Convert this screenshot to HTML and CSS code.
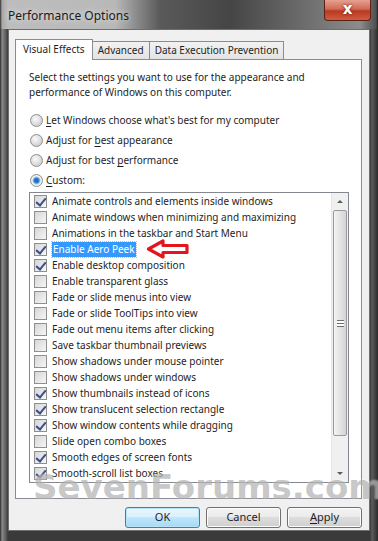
FILE: index.html
```html
<!DOCTYPE html>
<html lang="en">
<head>
    <meta charset="UTF-8">
    <meta name="viewport" content="width=device-width, initial-scale=1.0">
    <title>Performance Options</title>
    <link rel="stylesheet" href="styles.css">
</head>
<body>
    <div class="window">
        <div class="titlebar">
            <span class="title">Performance Options</span>
            <div class="close">x</div>
        </div>
        <div class="client">
            <div class="tabs">
                <div class="tab active">Visual Effects</div>
                <div class="tab">Advanced</div>
                <div class="tab">Data Execution Prevention</div>
            </div>
            <div class="panel">
                <p class="intro">Select the settings you want to use for the appearance and performance of Windows on this computer.</p>
                <div class="radios">
                    <div class="radio"><span class="dot"></span><span><u>L</u>et Windows choose what's best for my computer</span></div>
                    <div class="radio"><span class="dot"></span><span>Adjust for <u>b</u>est appearance</span></div>
                    <div class="radio"><span class="dot"></span><span>Adjust for best <u>p</u>erformance</span></div>
                    <div class="radio on"><span class="dot"></span><span><u>C</u>ustom:</span></div>
                </div>
                <div class="listbox">
                    <div class="items">
                        <div class="item on"><span class="cb"></span>Animate controls and elements inside windows</div>
                        <div class="item"><span class="cb"></span>Animate windows when minimizing and maximizing</div>
                        <div class="item"><span class="cb"></span>Animations in the taskbar and Start Menu</div>
                        <div class="item on"><span class="cb"></span><span class="sel">Enable Aero Peek</span>
                            <svg class="arrow" width="44" height="20" viewBox="0 0 44 20">
                                <path d="M2.5 10 L17 2 L17 6.5 L41 6.5 L41 13.5 L17 13.5 L17 18 Z" fill="#fff" stroke="#e3161f" stroke-width="3.2" stroke-linejoin="round"/>
                            </svg>
                        </div>
                        <div class="item on"><span class="cb"></span>Enable desktop composition</div>
                        <div class="item"><span class="cb"></span>Enable transparent glass</div>
                        <div class="item"><span class="cb"></span>Fade or slide menus into view</div>
                        <div class="item"><span class="cb"></span>Fade or slide ToolTips into view</div>
                        <div class="item"><span class="cb"></span>Fade out menu items after clicking</div>
                        <div class="item"><span class="cb"></span>Save taskbar thumbnail previews</div>
                        <div class="item"><span class="cb"></span>Show shadows under mouse pointer</div>
                        <div class="item"><span class="cb"></span>Show shadows under windows</div>
                        <div class="item on"><span class="cb"></span>Show thumbnails instead of icons</div>
                        <div class="item on"><span class="cb"></span>Show translucent selection rectangle</div>
                        <div class="item on"><span class="cb"></span>Show window contents while dragging</div>
                        <div class="item"><span class="cb"></span>Slide open combo boxes</div>
                        <div class="item on"><span class="cb"></span>Smooth edges of screen fonts</div>
                        <div class="item on"><span class="cb"></span>Smooth-scroll list boxes</div>
                    </div>
                    <div class="scrollbar">
                        <div class="sb-btn up"></div>
                        <div class="thumb"><span class="grip"></span></div>
                        <div class="sb-rest"></div>
                        <div class="sb-btn down"></div>
                    </div>
                </div>
            </div>
            <div class="buttons">
                <div class="btn default">OK</div>
                <div class="btn">Cancel</div>
                <div class="btn"><u>A</u>pply</div>
            </div>
            <div class="watermark">SevenForums.com</div>
        </div>
    </div>
</body>
</html>
```

FILE: styles.css
```css
* {
    margin: 0;
    padding: 0;
    box-sizing: border-box;
}
body {
    background: #3a3a3a;
    font-family: "Noto Sans", "Open Sans", sans-serif;
    font-size: 10px;
    color: #1e1e1e;
}
u {
    text-decoration: underline;
    text-underline-offset: 2px;
}
.window {
    width: 378px;
    height: 541px;
    padding: 0 8px 10px 8px;
    display: flex;
    flex-direction: column;
    background: linear-gradient(90deg, #262626 0, #8a8a8a 2px, #5a5a5a 6px, #3a3a3a 8px, #3a3a3a 370px, #5c5c5c 372px, #2a2a2a 378px);
}
.titlebar {
    height: 29px;
    margin: 0 -8px;
    padding: 0 8px;
    display: flex;
    justify-content: space-between;
    align-items: flex-start;
    background: linear-gradient(90deg, #2e2e2e 0, #a8a8a8 2px, #bdbdbd 8px, #b8b8b8 115px, #5a5a5a 160px, #454545 230px, #6a6a6a 300px, #8c8c8c 360px, #505050 376px, #222 378px);
}
.title {
    margin-top: 7px;
    font-size: 12px;
    color: #1a1a1a;
    text-shadow: 0 0 6px rgba(255, 255, 255, 0.8);
}
.close {
    width: 47px;
    height: 21px;
    margin-right: -1px;
    border: 1px solid #5a2016;
    border-top: 0;
    border-radius: 0 0 4px 4px;
    background: linear-gradient(#e6a090 0, #d26a55 45%, #b83a22 55%, #d05c40 100%);
    color: #fff;
    font-family: "DejaVu Sans", sans-serif;
    font-weight: bold;
    font-size: 15px;
    line-height: 18px;
    text-align: center;
    text-shadow: 0 0 3px #6a1a10;
}
.client {
    flex: 1;
    position: relative;
    background: #f0f0f0;
    border: 1px solid #6e6e6e;
    padding: 9px 7px 0 6px;
}
.tabs {
    display: flex;
    align-items: flex-end;
    height: 20px;
    position: relative;
    z-index: 1;
}
.tab {
    height: 18px;
    padding: 0 5px;
    border: 1px solid #898c95;
    border-bottom: 0;
    margin-left: -1px;
    background: linear-gradient(#f2f2f2, #e3e3e3);
    line-height: 17px;
    white-space: nowrap;
}
.tab.active {
    height: 21px;
    margin: 0 0 -1px 0;
    padding: 0 7px;
    background: #fff;
    line-height: 18px;
}
.panel {
    height: 440px;
    background: #fff;
    border: 1px solid #898c95;
    padding: 10px 12px 0 13px;
}
.intro {
    line-height: 15px;
    width: 300px;
}
.radios {
    margin-top: 10px;
}
.radio {
    display: flex;
    align-items: center;
    height: 20px;
}
.dot {
    width: 13px;
    height: 13px;
    margin: 0 3px 0 1px;
    border: 1px solid #8e8f8f;
    border-radius: 50%;
    background: radial-gradient(circle at 40% 35%, #fbfbfb, #d2d2d2 70%, #e6e6e6);
}
.radio.on .dot {
    background: radial-gradient(circle, #1d64b6 0, #2d7fd4 2.5px, #aacdef 3.5px, #f0f0f0 4.5px, #e6e6e6);
}
.listbox {
    margin-top: 2px;
    width: 320px;
    height: 291px;
    border: 1px solid #828790;
    display: flex;
}
.items {
    flex: 1;
    padding: 0 0 0 4px;
}
.item {
    height: 16px;
    display: flex;
    align-items: center;
    white-space: nowrap;
}
.cb {
    width: 13px;
    height: 13px;
    margin-right: 5px;
    border: 1px solid #8e8f8f;
    background: linear-gradient(135deg, #d6d6d6, #f6f6f6);
    position: relative;
}
.item.on .cb::after {
    content: "";
    position: absolute;
    left: 3px;
    top: 0;
    width: 4px;
    height: 8px;
    border-right: 2px solid #3c4f8c;
    border-bottom: 2px solid #3c4f8c;
    transform: rotate(40deg);
}
.sel {
    background: #3399ff;
    color: #fff;
    padding: 0 1px;
    line-height: 15px;
    outline: 1px dotted #c0c0c0;
}
.arrow {
    margin-left: 10px;
}
.scrollbar {
    width: 17px;
    display: flex;
    flex-direction: column;
    background: #f0f0f0;
    border-left: 1px solid #e6e6e6;
}
.sb-btn {
    height: 17px;
    position: relative;
}
.sb-btn::after {
    content: "";
    position: absolute;
    left: 5px;
    border-left: 3px solid transparent;
    border-right: 3px solid transparent;
}
.sb-btn.up::after {
    top: 7px;
    border-bottom: 3px solid #5c5c5c;
}
.sb-btn.down::after {
    top: 7px;
    border-top: 3px solid #5c5c5c;
}
.thumb {
    height: 226px;
    margin: 0 1px;
    border: 1px solid #9a9a9a;
    border-radius: 2px;
    background: linear-gradient(90deg, #f4f4f4, #e4e4e4 50%, #d4d4d4);
    display: flex;
    align-items: center;
    justify-content: center;
}
.grip {
    width: 7px;
    height: 7px;
    border-top: 1px solid #6e6e6e;
    border-bottom: 1px solid #6e6e6e;
    background: linear-gradient(#fff 2px, #6e6e6e 2px, #6e6e6e 3px, #fff 3px);
}
.sb-rest {
    flex: 1;
}
.buttons {
    display: flex;
    justify-content: flex-end;
    gap: 6px;
    margin-top: 8px;
}
.btn {
    width: 75px;
    height: 21px;
    border: 1px solid #707070;
    border-radius: 3px;
    background: linear-gradient(#f2f2f2 0, #ebebeb 50%, #dddddd 50%, #cfcfcf 100%);
    box-shadow: inset 0 0 0 1px #fcfcfc;
    font-size: 11px;
    text-align: center;
    line-height: 18px;
}
.btn.default {
    border-color: #3c7fb1;
    background: linear-gradient(#eaf6fd 0, #d9f0fc 50%, #bee6fd 50%, #a7d9f5 100%);
    box-shadow: inset 0 0 0 1px #b6e3f7;
}
.watermark {
    position: absolute;
    left: 24px;
    top: 438px;
    font-family: "DejaVu Sans", Verdana, sans-serif;
    font-weight: bold;
    font-size: 34px;
    line-height: 38px;
    color: rgba(110, 110, 110, 0.4);
    text-shadow: 0 0 2px rgba(255, 255, 255, 0.6);
    pointer-events: none;
}
```
